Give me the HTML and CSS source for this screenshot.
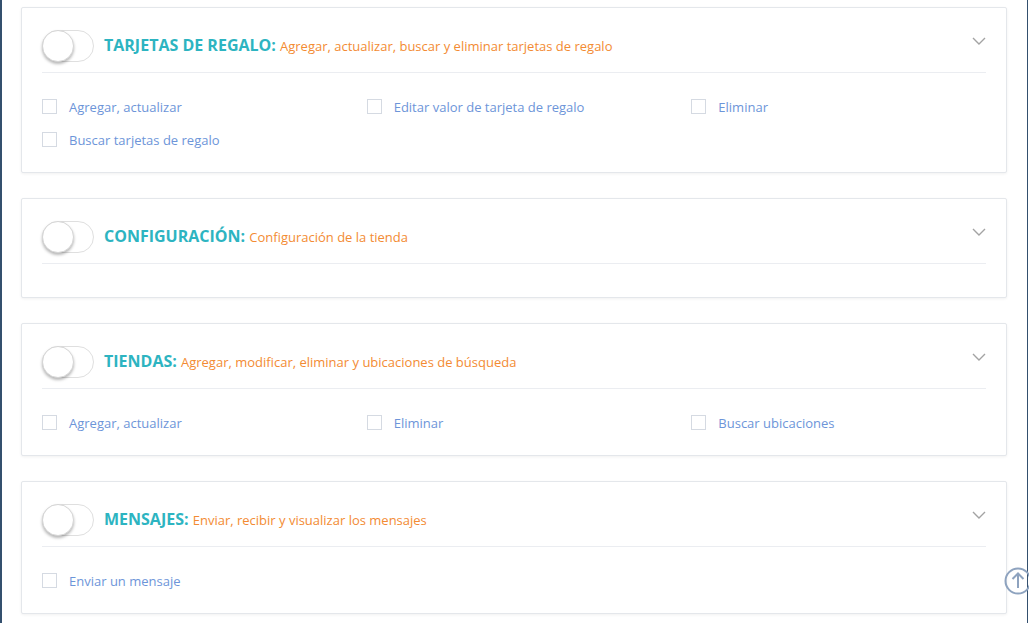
FILE: index.html
```html
<!DOCTYPE html>
<html lang="es">
<head>
  <meta charset="UTF-8" />
  <meta name="viewport" content="width=device-width, initial-scale=1.0" />
  <title>Permisos</title>
  <link rel="stylesheet" href="styles.css">
</head>
<body>
<div class="page">

  <!-- Tarjetas de regalo -->
  <section class="perm-card">
    <div class="perm-head">
      <span class="switch"><span class="knob"></span></span>
      <h3 class="perm-title">Tarjetas de regalo: <span class="perm-desc">Agregar, actualizar, buscar y eliminar tarjetas de regalo</span></h3>
      <svg class="chevron" width="14" height="8" viewBox="0 0 14 8"><polyline points="1,1 7,7 13,1" /></svg>
    </div>
    <div class="perm-body">
      <label class="perm-item"><span class="box"></span>Agregar, actualizar</label>
      <label class="perm-item"><span class="box"></span>Editar valor de tarjeta de regalo</label>
      <label class="perm-item"><span class="box"></span>Eliminar</label>
      <label class="perm-item"><span class="box"></span>Buscar tarjetas de regalo</label>
    </div>
  </section>

  <!-- Configuracion -->
  <section class="perm-card">
    <div class="perm-head">
      <span class="switch"><span class="knob"></span></span>
      <h3 class="perm-title">Configuración: <span class="perm-desc">Configuración de la tienda</span></h3>
      <svg class="chevron" width="14" height="8" viewBox="0 0 14 8"><polyline points="1,1 7,7 13,1" /></svg>
    </div>
    <div class="perm-body"></div>
  </section>

  <!-- Tiendas -->
  <section class="perm-card">
    <div class="perm-head">
      <span class="switch"><span class="knob"></span></span>
      <h3 class="perm-title">Tiendas: <span class="perm-desc">Agregar, modificar, eliminar y ubicaciones de búsqueda</span></h3>
      <svg class="chevron" width="14" height="8" viewBox="0 0 14 8"><polyline points="1,1 7,7 13,1" /></svg>
    </div>
    <div class="perm-body">
      <label class="perm-item"><span class="box"></span>Agregar, actualizar</label>
      <label class="perm-item"><span class="box"></span>Eliminar</label>
      <label class="perm-item"><span class="box"></span>Buscar ubicaciones</label>
    </div>
  </section>

  <!-- Mensajes -->
  <section class="perm-card">
    <div class="perm-head">
      <span class="switch"><span class="knob"></span></span>
      <h3 class="perm-title">Mensajes: <span class="perm-desc">Enviar, recibir y visualizar los mensajes</span></h3>
      <svg class="chevron" width="14" height="8" viewBox="0 0 14 8"><polyline points="1,1 7,7 13,1" /></svg>
    </div>
    <div class="perm-body">
      <label class="perm-item"><span class="box"></span>Enviar un mensaje</label>
    </div>
  </section>

</div>

<!-- Back to top -->
<a class="to-top" href="#">
  <svg width="28" height="28" viewBox="0 0 28 28">
    <circle cx="14" cy="14" r="12.5" />
    <polyline points="8.5,12 14,6.5 19.5,12" />
    <line x1="14" y1="7" x2="14" y2="21" />
  </svg>
</a>
</body>
</html>
```

FILE: styles.css
```css
/* Global */
body {
  margin: 0;
  padding: 0;
  background: #fff;
  font-family: "Open Sans", Arial, sans-serif;
  overflow: hidden;
}
.page {
  border-left: 2px solid #34506e;
  border-right: 1px solid #34506e;
  margin-right: 1px;
  padding: 7px 20px 0 19px;
  min-height: 623px;
  box-sizing: border-box;
}
/* Permission cards */
.perm-card {
  background: #fff;
  border: 1px solid #e4e7eb;
  border-radius: 2px;
  box-shadow: 0 1px 3px rgba(0,0,0,0.06);
  padding: 0 20px;
  margin-bottom: 25px;
}
.perm-head {
  display: flex;
  align-items: center;
  height: 32px;
  padding: 22px 0 10px;
  border-bottom: 1px solid #ebedf1;
}
.switch {
  position: relative;
  width: 52px;
  height: 32px;
  box-sizing: border-box;
  border: 1px solid #dfdfdf;
  border-radius: 16px;
  background: #fff;
  flex-shrink: 0;
}
.knob {
  position: absolute;
  left: -1px;
  top: -1px;
  width: 32px;
  height: 32px;
  box-sizing: border-box;
  border: 1px solid #d6d6d6;
  border-radius: 50%;
  background: #fff;
  box-shadow: 0 2px 3px rgba(0,0,0,0.28);
}
.perm-title {
  flex: 1;
  margin: 0 0 2px 10px;
  font-size: 16px;
  font-weight: 700;
  text-transform: uppercase;
  color: #2db4c1;
  line-height: 20px;
}
.perm-desc {
  font-size: 13px;
  font-weight: 400;
  text-transform: none;
  color: #f38b33;
}
.chevron {
  align-self: flex-start;
  margin-top: 7px;
  fill: none;
  stroke: #a3a3a3;
  stroke-width: 1.4;
}
.perm-body {
  display: grid;
  grid-template-columns: repeat(3, 1fr);
  column-gap: 30px;
  padding: 17px 0 16px;
}
.perm-item {
  display: flex;
  align-items: center;
  height: 33px;
  font-size: 13px;
  color: #6d95d9;
  cursor: pointer;
}
.box {
  width: 15px;
  height: 15px;
  box-sizing: border-box;
  border: 1px solid #d5dae2;
  margin-right: 12px;
  flex-shrink: 0;
}
/* Back to top */
.to-top {
  position: fixed;
  left: 1004px;
  top: 567px;
  width: 28px;
  height: 28px;
}
.to-top svg {
  fill: none;
  stroke: #8ea3bf;
  stroke-width: 2;
}
```
